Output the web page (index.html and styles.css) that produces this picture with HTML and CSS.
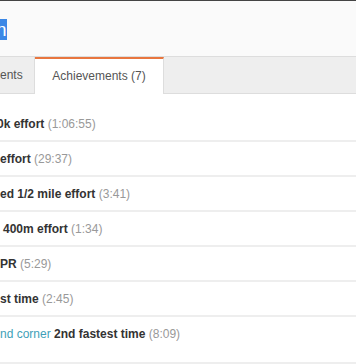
FILE: index.html
```html
<!DOCTYPE html>
<html>
<head>
	<title>Activity achievements</title>
	<link rel="stylesheet" href="styles.css">
</head>
<body>
	<header class="page-head">
		<h1 class="title"><span class="selected">n</span></h1>
	</header>
	<nav class="tabs">
		<div class="tab">ents</div>
		<div class="tab active">Achievements (7)</div>
	</nav>
	<ul class="achievements">
		<li class="cut"><strong>0k effort</strong> <span class="time">(1:06:55)</span></li>
		<li><strong>effort</strong> <span class="time">(29:37)</span></li>
		<li><strong>ed 1/2 mile effort</strong> <span class="time">(3:41)</span></li>
		<li class="indent"><strong>400m effort</strong> <span class="time">(1:34)</span></li>
		<li><strong>PR</strong> <span class="time">(5:29)</span></li>
		<li><strong>st time</strong> <span class="time">(2:45)</span></li>
		<li class="last"><a href="#">nd corner</a> <strong>2nd fastest time</strong> <span class="time">(8:09)</span></li>
	</ul>
</body>
</html>
```

FILE: styles.css
```css
body {
	margin: 0;
	font-family: "Liberation Sans", Arial, sans-serif;
	font-size: 12px;
	color: #333;
	background: #fff;
	overflow: hidden;
}

.page-head {
	height: 55px;
	border-top: 1px solid #444;
	border-bottom: 1px solid #ddd;
	background: #fafafa;
}

.title {
	margin: 0;
	padding-top: 18px;
	font-size: 19px;
	font-weight: normal;
	line-height: 21px;
}

.selected {
	display: inline-block;
	width: 7px;
	overflow: hidden;
	background: #3b87e6;
	color: #fff;
	text-indent: -4px;
}

.tabs {
	display: flex;
	height: 36px;
	background: #eee;
	border-bottom: 1px solid #ddd;
}

.tab {
	box-sizing: border-box;
	height: 36px;
	line-height: 37px;
	color: #555;
}

.tab:first-child {
	width: 35px;
	border-right: 1px solid #ddd;
}

.tab.active {
	width: 129px;
	height: 37px;
	border-top: 2px solid #e8763f;
	border-right: 1px solid #ddd;
	background: #fff;
	text-align: center;
	line-height: 35px;
}

.achievements {
	list-style: none;
	margin: 0;
	padding: 13px 0 0;
}

.achievements li {
	height: 33px;
	line-height: 35px;
	border-bottom: 2px solid #eee;
	white-space: nowrap;
}

.achievements li.cut {
	text-indent: -3px;
}

.achievements li.indent {
	text-indent: 3px;
}

.achievements li.last {
	height: 45px;
}

.time {
	color: #999;
}

a {
	color: #3f9fb8;
	text-decoration: none;
}
```
